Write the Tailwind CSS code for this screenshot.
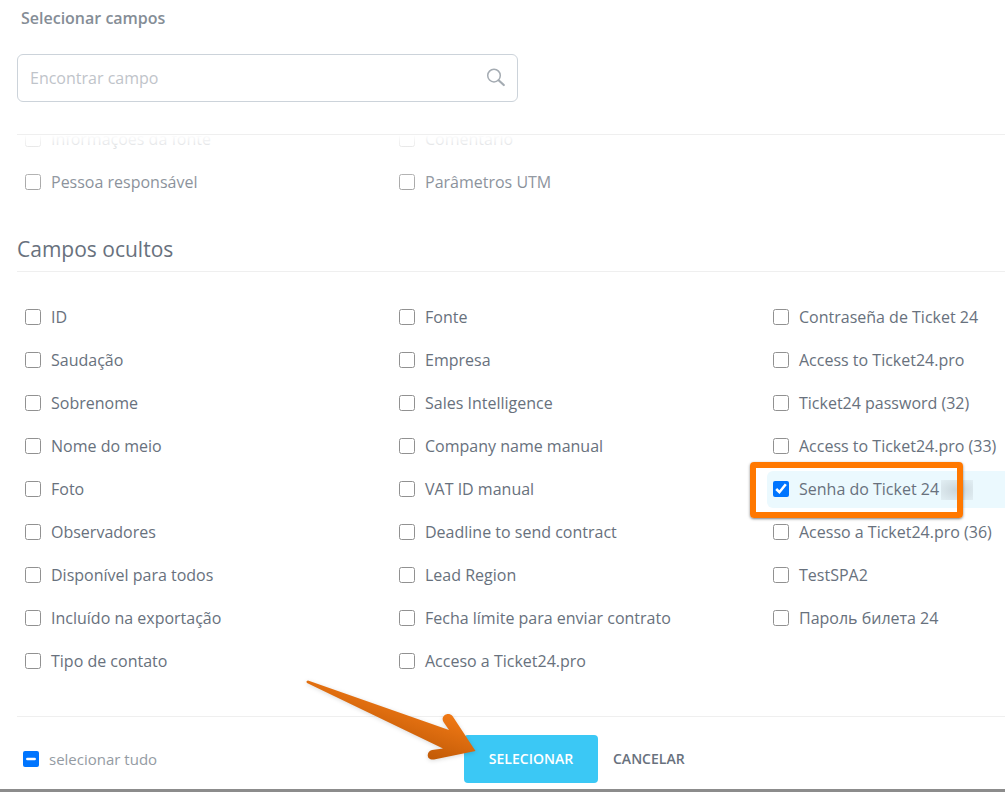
<!DOCTYPE html>
<html lang="pt">
<head>
    <meta charset="UTF-8">
    <meta name="viewport" content="width=device-width, initial-scale=1.0">
    <title>Selecionar campos</title>
    <script src="https://cdn.jsdelivr.net/npm/@tailwindcss/browser@4"></script>
</head>
<body class="bg-white font-['Open_Sans','Noto_Sans',sans-serif] text-base text-[#68717d]">

    <div class="flex min-h-screen flex-col overflow-hidden border-b-3 border-[#8c8c8c]">

        <!-- Title and search -->
        <header class="pl-[17px]">
            <h1 class="pt-1.5 pl-1 text-base leading-6 font-semibold text-[#858d96]">Selecionar campos</h1>
            <div class="relative mt-6 h-12 w-[50.7%]">
                <input type="text" aria-label="Encontrar campo" placeholder="Encontrar campo" class="h-full w-full rounded-md border border-[#ccd3da] pr-12 pl-3 outline-none placeholder:text-[#bfc4ca]">
                <svg class="absolute top-3.5 right-3 size-5" viewBox="0 0 20 20" fill="none" stroke="#a4abb2" aria-hidden="true">
                    <circle cx="8" cy="7.600" r="6.300" stroke-width="1.500"/>
                    <path d="M12.600 12.200L17.800 17" stroke-width="2.200" stroke-linecap="round"/>
                </svg>
            </div>
            <div class="mt-8 border-b border-[#efefef]"></div>
        </header>

        <main class="relative flex-1 overflow-hidden">
            <div class="-mt-3.5 grid grid-cols-[11fr_11fr_7fr] gap-y-1.5 pl-[19px] leading-[37px]">
                <label class="flex items-center gap-2.5 pl-1.5"><input type="checkbox" class="mb-0.5 size-4 opacity-80">Informações da fonte</label>
                <label class="col-span-2 flex items-center gap-2.5 pl-1.5"><input type="checkbox" class="mb-0.5 size-4 opacity-80">Comentário</label>
                <label class="flex items-center gap-2.5 pl-1.5"><input type="checkbox" class="mb-0.5 size-4 opacity-80">Pessoa responsável</label>
                <label class="col-span-2 flex items-center gap-2.5 pl-1.5"><input type="checkbox" class="mb-0.5 size-4 opacity-80">Parâmetros UTM</label>
            </div>
            <!-- Fade at the top edge of the list -->
            <div class="pointer-events-none absolute inset-x-0 top-0 h-20 bg-linear-to-b from-white via-white/30 to-transparent"></div>

            <h2 class="mt-8 ml-[17px] border-b border-[#efefef] pb-1.5 text-[21px] leading-8">Campos ocultos</h2>

            <div class="mt-[27px] grid grid-flow-col grid-cols-[11fr_11fr_7fr] grid-rows-9 gap-y-1.5 pl-[19px] leading-[37px] whitespace-nowrap">
                <label class="flex items-center gap-2.5 pl-1.5"><input type="checkbox" class="mb-0.5 size-4 opacity-80">ID</label>
                <label class="flex items-center gap-2.5 pl-1.5"><input type="checkbox" class="mb-0.5 size-4 opacity-80">Saudação</label>
                <label class="flex items-center gap-2.5 pl-1.5"><input type="checkbox" class="mb-0.5 size-4 opacity-80">Sobrenome</label>
                <label class="flex items-center gap-2.5 pl-1.5"><input type="checkbox" class="mb-0.5 size-4 opacity-80">Nome do meio</label>
                <label class="flex items-center gap-2.5 pl-1.5"><input type="checkbox" class="mb-0.5 size-4 opacity-80">Foto</label>
                <label class="flex items-center gap-2.5 pl-1.5"><input type="checkbox" class="mb-0.5 size-4 opacity-80">Observadores</label>
                <label class="flex items-center gap-2.5 pl-1.5"><input type="checkbox" class="mb-0.5 size-4 opacity-80">Disponível para todos</label>
                <label class="flex items-center gap-2.5 pl-1.5"><input type="checkbox" class="mb-0.5 size-4 opacity-80">Incluído na exportação</label>
                <label class="flex items-center gap-2.5 pl-1.5"><input type="checkbox" class="mb-0.5 size-4 opacity-80">Tipo de contato</label>

                <label class="flex items-center gap-2.5 pl-1.5"><input type="checkbox" class="mb-0.5 size-4 opacity-80">Fonte</label>
                <label class="flex items-center gap-2.5 pl-1.5"><input type="checkbox" class="mb-0.5 size-4 opacity-80">Empresa</label>
                <label class="flex items-center gap-2.5 pl-1.5"><input type="checkbox" class="mb-0.5 size-4 opacity-80">Sales Intelligence</label>
                <label class="flex items-center gap-2.5 pl-1.5"><input type="checkbox" class="mb-0.5 size-4 opacity-80">Company name manual</label>
                <label class="flex items-center gap-2.5 pl-1.5"><input type="checkbox" class="mb-0.5 size-4 opacity-80">VAT ID manual</label>
                <label class="flex items-center gap-2.5 pl-1.5"><input type="checkbox" class="mb-0.5 size-4 opacity-80">Deadline to send contract</label>
                <label class="flex items-center gap-2.5 pl-1.5"><input type="checkbox" class="mb-0.5 size-4 opacity-80">Lead Region</label>
                <label class="flex items-center gap-2.5 pl-1.5"><input type="checkbox" class="mb-0.5 size-4 opacity-80">Fecha límite para enviar contrato</label>
                <label class="flex items-center gap-2.5 pl-1.5"><input type="checkbox" class="mb-0.5 size-4 opacity-80">Acceso a Ticket24.pro</label>

                <label class="flex items-center gap-2.5 pl-1.5"><input type="checkbox" class="mb-0.5 size-4 opacity-80">Contraseña de Ticket 24</label>
                <label class="flex items-center gap-2.5 pl-1.5"><input type="checkbox" class="mb-0.5 size-4 opacity-80">Access to Ticket24.pro</label>
                <label class="flex items-center gap-2.5 pl-1.5"><input type="checkbox" class="mb-0.5 size-4 opacity-80">Ticket24 password (32)</label>
                <label class="flex items-center gap-2.5 pl-1.5"><input type="checkbox" class="mb-0.5 size-4 opacity-80">Access to Ticket24.pro (33)</label>
                <label class="relative flex items-center rounded-l-md bg-[#ebf9fe] pl-1.5">
                    <input type="checkbox" class="mr-2.5 mb-0.5 size-4" checked>Senha do Ticket 24
                    <span class="ml-0.5 h-5 w-8 bg-radial from-[#c9d5db] to-[#e2eff4]"></span>
                    <span class="absolute -top-[9px] -left-[17px] h-14 w-[213px] rounded-sm border-6 border-[#ff7800] shadow-sm shadow-black/40"></span>
                </label>
                <label class="flex items-center gap-2.5 pl-1.5"><input type="checkbox" class="mb-0.5 size-4 opacity-80">Acesso a Ticket24.pro (36)</label>
                <label class="flex items-center gap-2.5 pl-1.5"><input type="checkbox" class="mb-0.5 size-4 opacity-80">TestSPA2</label>
                <label class="flex items-center gap-2.5 pl-1.5"><input type="checkbox" class="mb-0.5 size-4 opacity-80">Пароль билета 24</label>
            </div>
        </main>

        <!-- Actions -->
        <footer class="ml-[17px] grid grid-cols-[447fr_541fr] items-center border-t border-[#efefef] pt-[18px] pb-1.5">
            <label class="flex items-center gap-2.5 pl-1.5 text-[15px] text-[#949ba3]"><input type="checkbox" id="selectAll" class="size-4">selecionar tudo</label>
            <div class="flex items-center text-sm font-semibold">
                <div class="relative">
                    <button type="button" class="h-12 w-[134px] rounded bg-[#3bc8f5] text-white">SELECIONAR</button>
                    <svg class="pointer-events-none absolute -top-[57px] -left-[160px] h-[90px] w-[180px] drop-shadow-sm" viewBox="304 678 180 90" aria-hidden="true">
                        <defs>
                            <linearGradient id="arrowFill" gradientUnits="userSpaceOnUse" x1="420" y1="700" x2="400" y2="758">
                                <stop offset="0" stop-color="#f47b16"/>
                                <stop offset="1" stop-color="#b95504"/>
                            </linearGradient>
                        </defs>
                        <path d="M308 680.5L449 730L443.500 722C440 716 448 711 452.500 716L475.500 751L434 759.500C426 760.500 426 751.500 432 750L443 748.500L307 683Q305.500 681 308 680.500Z" fill="url(#arrowFill)"/>
                    </svg>
                </div>
                <button type="button" class="ml-[15px]">CANCELAR</button>
            </div>
        </footer>
    </div>

    <script>
        // Only part of the fields is ticked
        document.getElementById('selectAll').indeterminate = true;
    </script>

</body>
</html>
